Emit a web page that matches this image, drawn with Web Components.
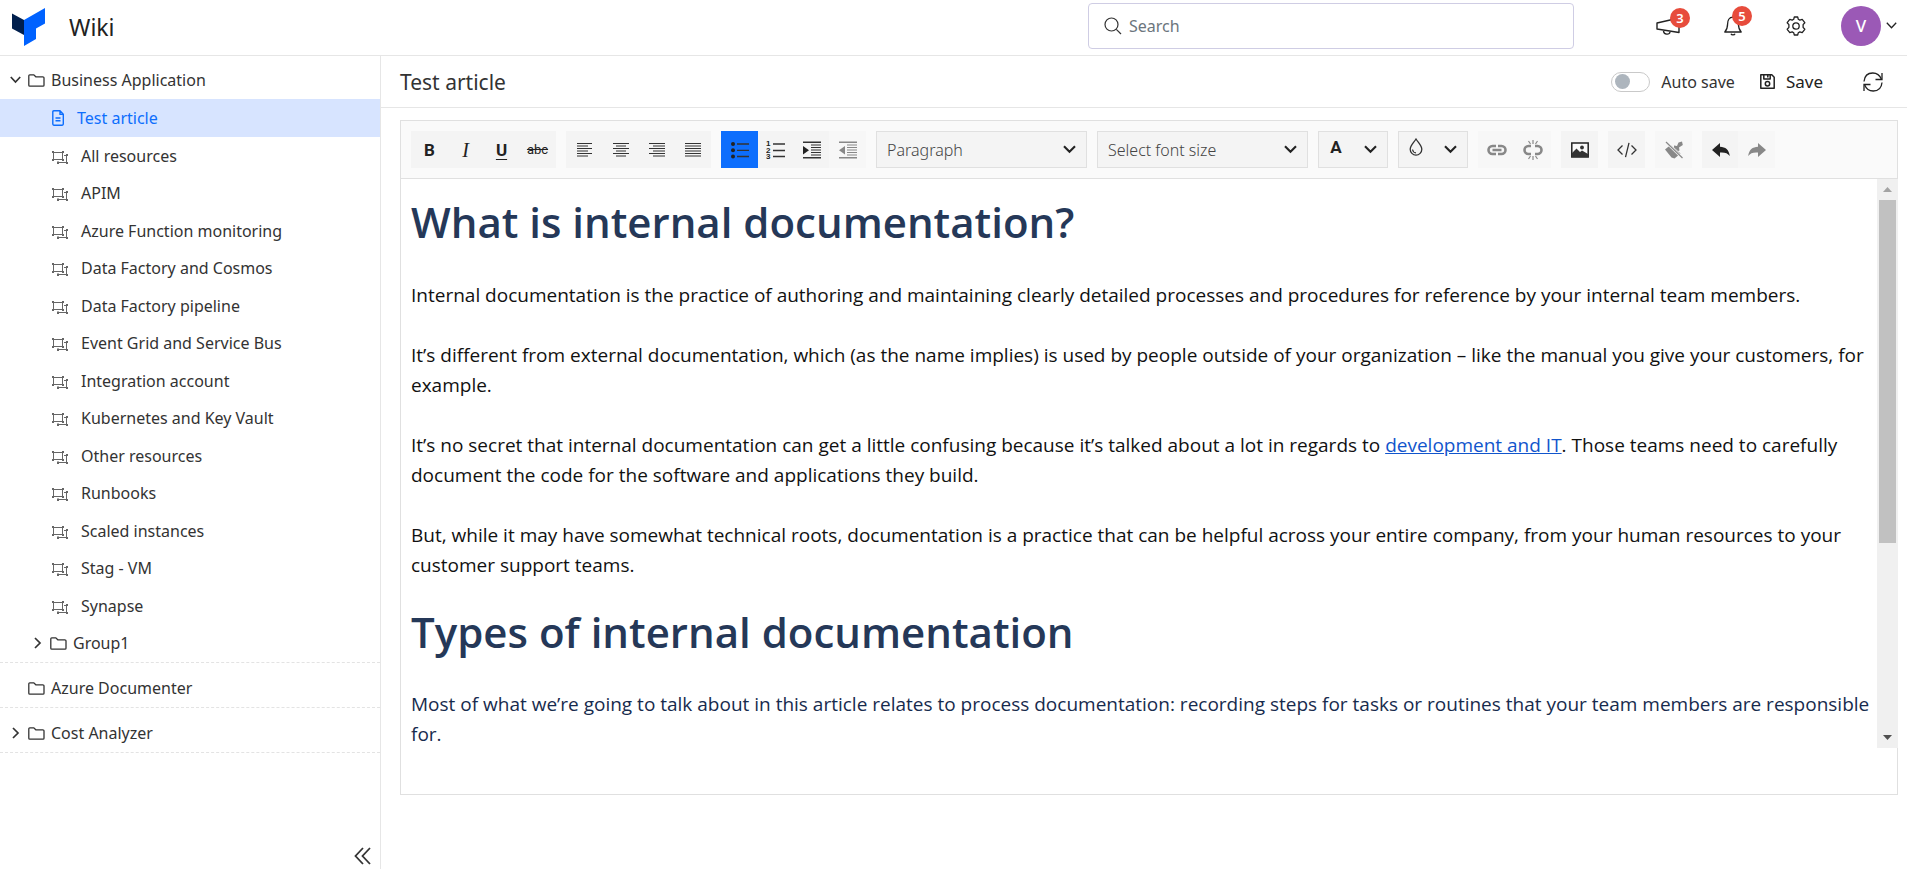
<!DOCTYPE html>
<html lang="en">
<head>
<meta charset="utf-8">
<title>Wiki</title>
<style>
  html, body { height: 100%; margin: 0; }
  body {
    background: #fff;
    color: #333;
    font-family: "Noto Sans", sans-serif;
    font-size: 16px;
    line-height: 24px;
  }
</style>
</head>
<body>
<wiki-app></wiki-app>

<script>
const ICONS = {
  logo: [33, 38, '<path d="M0 5.500L12 12v15L0 20.500z" fill="#001f4d"/><path d="M12 12L33 0v15.500L24 20.500V31L12 38z" fill="#0062ff"/>'],
  search: [18, 18, '<g fill="none" stroke="#333" stroke-width="1.200"><circle cx="7.500" cy="7.500" r="6.500"/><path d="M12.300 12.300L17 17"/></g>'],
  megaphone: [24, 18, '<g fill="none" stroke="#222" stroke-width="1.400" stroke-linejoin="round"><path d="M1 6L23 1v14.500L1 12z"/><path d="M7.500 14c.3 4 6 4 6.500 1"/></g>'],
  bell: [18, 20, '<g fill="none" stroke="#222" stroke-width="1.300" stroke-linejoin="round"><path d="M9 1.200C5 1.200 3.600 4.600 3.600 8c0 4-1 6-2.800 8h16.400c-1.800-2-2.800-4-2.800-8 0-3.400-1.400-6.800-5.400-6.800z"/><path d="M7 17.800c.5 1.500 3.500 1.500 4 0"/></g>'],
  gear: [20, 20, '<g fill="none" stroke="#222" stroke-width="1.300" stroke-linejoin="round"><circle cx="10" cy="10" r="3.200"/><path d="M8.300 1h3.400l.6 2.300 1.500.8 2.400-.8 2.600 3.400-1.700 1.900v2.800l1.700 1.900-2.600 3.400-2.400-.8-1.500.8-.6 2.300H8.300l-.6-2.300-1.500-.8-2.400.8-2.600-3.400 1.700-1.900V8.600L1.200 6.700l2.600-3.400 2.400.8 1.500-.8z"/></g>'],
  caret: [11, 7, '<path d="M.8.8l4.700 4.900L10.200.8" fill="none" stroke="#222" stroke-width="1.300"/>'],
  down: [11, 8, '<path d="M.8 1l4.700 5L10.200 1" fill="none" stroke="#333" stroke-width="1.700"/>'],
  select: [13, 9, '<path d="M1 1.300l5.500 5.500L12 1.300" fill="none" stroke="#222" stroke-width="2.100"/>'],
  right: [11, 12, '<path d="M3 1l5 5-5 5" fill="none" stroke="#333" stroke-width="1.700"/>'],
  folder: [17, 13, '<path d="M.8 11.200V1.800q0-1 1-1h4l2 2h7q1.200 0 1.200 1v7.400q0 1-1 1H1.800q-1 0-1-1z" fill="none" stroke="#333" stroke-width="1.300"/>'],
  file: [12, 16, '<g fill="none" stroke="#0d6efd" stroke-width="1.400" stroke-linejoin="round"><path d="M1.800.8H8l3.300 3.400v9.900q0 1.100-1.100 1.100H1.800Q.8 15.200.8 14.100V1.900Q.8.800 1.800.800zM8 1v3.400h3M3.500 8h5M3.500 10.800h5"/></g>'],
  resource: [16, 13, '<g fill="none" stroke="#666" stroke-width="1"><path d="M1.500 1.500h9v7h-9zM12 4.500h2.500v7h-8.500V10"/></g><g fill="#666"><path d="M0 0h2v2H0zM10 0h2v2h-2zM0 8h2v2H0zM10 8h2v2h-2zM14 3h2v2h-2zM14 11h2v2h-2zM5 11h2v2H5z"/></g>'],
  collapse: [17, 18, '<path d="M9 1L1.500 9 9 17M16 1L8.500 9l7.500 8" fill="none" stroke="#333" stroke-width="1.800"/>'],
  save: [15, 15, '<g fill="none" stroke="#222" stroke-width="1.500" stroke-linejoin="round"><path d="M.8.800h11l2.400 2.400v11H.8zM3.800 1v4h6.400V1M7.800 1v2.400"/><circle cx="7.500" cy="9.700" r="2.200"/></g>'],
  refresh: [20, 20, '<g fill="none" stroke="#222" stroke-width="1.300"><path d="M1 9.500C1.500 4 5 1 9.800 1c4 0 7 2.200 8.600 6.300M19 10.500c-.5 5.500-4 8.500-8.800 8.500-4 0-7-2.200-8.600-6.300"/><path d="M19 1v6.500h-6.500M1 19v-6.500h6.500"/></g>'],
  alignLeft: [16, 14, '<path d="M0 .5h15M0 3h11M0 5.500h15M0 8h11M0 10.500h15M0 13h11" stroke="#333" stroke-width="1.200"/>'],
  alignCenter: [16, 14, '<path d="M0 .5h16M3 3h10M0 5.500h16M3 8h10M0 10.500h16M3 13h10" stroke="#333" stroke-width="1.200"/>'],
  alignRight: [16, 14, '<path d="M0 .5h16M4 3h12M0 5.500h16M4 8h12M0 10.500h16M4 13h12" stroke="#333" stroke-width="1.200"/>'],
  alignJustify: [16, 14, '<path d="M0 .5h16M0 3h16M0 5.500h16M0 8h16M0 10.500h16M0 13h16" stroke="#333" stroke-width="1.200"/>'],
  bullets: [18, 18, '<g fill="#222"><circle cx="2" cy="3" r="2"/><circle cx="2" cy="9.300" r="2"/><circle cx="2" cy="15.500" r="2"/></g><path d="M6 3h12M6 9.300h12M6 15.500h12" stroke="#333" stroke-width="1.300"/>'],
  numbers: [19, 20, '<path d="M7 4h12M7 10.500h12M7 16.500h12" stroke="#333" stroke-width="1.300"/><g fill="#222" font-family="Liberation Sans" font-weight="700" font-size="8"><text x="0" y="6">1</text><text x="0" y="13">2</text><text x="0" y="19">3</text></g>'],
  indent: [18, 18, '<path d="M0 1.300h18M0 16.700h18" stroke="#333" stroke-width="1.500"/><path d="M8 4h10M8 6.500h10M8 9h10M8 11.500h10M8 14h10" stroke="#333" stroke-width="1.200"/><path d="M0 5l6 4.200L0 13.500z" fill="#222"/>'],
  outdent: [18, 18, '<path d="M0 1.300h18M0 16.700h18" stroke="#888" stroke-width="1.500"/><path d="M8 4h10M8 6.500h10M8 9h10M8 11.500h10M8 14h10" stroke="#888" stroke-width="1.200"/><path d="M6 5L0 9.200l6 4.300z" fill="#888"/>'],
  drop: [14, 18, '<path d="M7 1C4.500 5 1.200 7.500 1.200 11.300a5.800 5.800 0 0 0 11.600 0C12.800 7.500 9.500 5 7 1z" fill="none" stroke="#333" stroke-width="1.300"/><path d="M3.500 11.500c.3 2 1.500 3.200 3.500 3.400" fill="none" stroke="#333" stroke-width="1.200"/>'],
  link: [20, 12, '<g fill="none" stroke="#888" stroke-width="2.600"><path d="M9 2H5.500a4 4 0 0 0 0 8H9M11 2h3.500a4 4 0 0 1 0 8H11M5.500 6h9"/></g>'],
  unlink: [20, 20, '<g fill="none" stroke="#888"><path d="M8 6H5.500a4 4 0 0 0 0 8H8M12 6h2.500a4 4 0 0 1 0 8H12" stroke-width="2.600"/><path d="M10 0v4M10 16v4M5.500 1l2 3M14.500 1l-2 3M5.500 19l2-3M14.500 19l-2-3" stroke-width="1.200"/></g>'],
  image: [18, 16, '<path d="M.8 1h16.400v14H.8z" fill="#fafafa" stroke="#222" stroke-width="1.500"/><circle cx="11" cy="5.500" r="1.900" fill="#333"/><path d="M1 15v-4l4.500-4.500L9 10l2-1.500L17 12v3z" fill="#333"/>'],
  code: [20, 16, '<path d="M5.500 3.500L1 8l4.500 4.500M14.500 3.500L19 8l-4.500 4.500M12 .8L8.500 15.200" fill="none" stroke="#333" stroke-width="1.300"/>'],
  clear: [18, 18, '<path d="M0 8.500L5.500 4l10 8.500-6 5-3-1z" fill="#888"/><path d="M9 4.500l3 .5 1.500-3.500L17 .5l.8 3.500L14 6.500l.5 3-1.500.5-4-3.500z" fill="#888"/><path d="M1 1l16.500 16" stroke="#f7f7f7" stroke-width="2.600"/><path d="M1 1l16.500 16" stroke="#888" stroke-width="1.200"/>'],
  undo: [18, 14, '<path d="M8 0v3.800c5.500.2 9 3 9.800 9.200C15.500 10 13 9.200 8 9.500V14L0 7z" fill="#222"/>'],
  redo: [18, 14, '<path d="M10 0v3.800C4.500 4 1 6.800.2 13 2.500 10 5 9.200 10 9.500V14l8-7z" fill="#888"/>'],
};

/* Defines a custom element whose open shadow root holds the given markup. */
function define(name, html) {
  const template = document.createElement('template');
  template.innerHTML = html;
  customElements.define(name, class extends HTMLElement {
    constructor() {
      super();
      this.attachShadow({ mode: 'open' }).append(template.content.cloneNode(true));
    }
  });
}

class UiIcon extends HTMLElement {
  constructor() {
    super();
    this.attachShadow({ mode: 'open' });
  }
  connectedCallback() {
    const [w, h, body] = ICONS[this.getAttribute('name')];
    this.shadowRoot.innerHTML = `
      <style>:host { display: inline-flex; flex: none; } svg { display: block; }</style>
      <svg width="${w}" height="${h}" viewBox="0 0 ${w} ${h}" aria-hidden="true">${body}</svg>`;
  }
}
customElements.define('ui-icon', UiIcon);

define('ui-badge', `
  <style>
    :host {
      position: absolute; box-sizing: border-box; width: 20px; height: 20px;
      border-radius: 50%; background: #e74c3c; color: #fff;
      font-size: 13px; font-weight: 600; line-height: 20px; text-align: center;
    }
  </style>
  <slot></slot>`);

define('wiki-header', `
  <style>
    :host { display: block; }
    header {
      display: flex; align-items: center; box-sizing: border-box; height: 56px;
      padding: 0 10px 0 12px; border-bottom: 1px solid #e6e6e6;
    }
    header > ui-icon { margin-bottom: 2px; }
    h1 { margin: 0 auto 2px 24px; font-size: 23px; font-weight: 400; line-height: 30px; color: #222; }
    .search {
      display: flex; align-items: center; gap: 7px; box-sizing: border-box;
      width: 486px; height: 46px; padding: 0 15px; margin: 0 82px 3px 0;
      border: 1px solid #cfcde4; border-radius: 4px;
    }
    input { flex: 1; min-width: 0; border: 0; outline: 0; padding: 0; font: inherit; color: #333; background: none; }
    input::placeholder { color: #6c757d; opacity: 1; }
    .actions { display: flex; align-items: center; gap: 44px; padding-bottom: 4px; }
    button { position: relative; display: flex; align-items: center; padding: 0; border: 0; background: none; font: inherit; }
    .news ui-badge { right: -10px; top: -9px; }
    .alerts ui-badge { right: -10px; top: -10px; }
    .account { gap: 5px; margin: 0 0 4px 35px; }
    .avatar {
      width: 40px; height: 40px; border-radius: 50%; background: #9b59b6;
      color: #fff; font-size: 17px; font-weight: 500; line-height: 40px; text-align: center;
    }
  </style>
  <header>
    <ui-icon name="logo"></ui-icon>
    <h1>Wiki</h1>
    <label class="search"><ui-icon name="search"></ui-icon><input type="search" placeholder="Search" aria-label="Search"></label>
    <div class="actions">
      <button class="news" aria-label="Announcements"><ui-icon name="megaphone"></ui-icon><ui-badge>3</ui-badge></button>
      <button class="alerts" aria-label="Notifications"><ui-icon name="bell"></ui-icon><ui-badge>5</ui-badge></button>
      <button aria-label="Settings"><ui-icon name="gear"></ui-icon></button>
    </div>
    <button class="account" aria-label="Account"><span class="avatar">V</span><ui-icon name="caret"></ui-icon></button>
  </header>`);

define('tree-folder', `
  <style>
    :host { display: flex; align-items: center; padding-left: 10px; }
    :host([nested]) { padding-left: 32px; }
    .toggle { display: flex; width: 11px; margin-right: 7px; }
    button { display: flex; padding: 0; border: 0; background: none; }
    ui-icon[name=folder] { margin-right: 6px; }
    .right, .down { display: none; }
    :host([state=open]) .down, :host([state=closed]) .right { display: flex; }
  </style>
  <span class="toggle">
    <button class="down" aria-label="Collapse"><ui-icon name="down"></ui-icon></button>
    <button class="right" aria-label="Expand"><ui-icon name="right"></ui-icon></button>
  </span>
  <ui-icon name="folder"></ui-icon>
  <slot></slot>`);

define('tree-page', `
  <style>
    :host { display: flex; }
    a { display: flex; flex: 1; align-items: center; gap: 13px; padding-left: 52px; color: #333; text-decoration: none; }
    .file { display: none; }
    .resource { padding-top: 3px; }
    :host([current]) a { background: #d7e4ff; color: #0d6efd; }
    :host([current]) .file { display: flex; }
    :host([current]) .resource { display: none; }
  </style>
  <a href="#"><ui-icon class="file" name="file"></ui-icon><ui-icon class="resource" name="resource"></ui-icon><slot></slot></a>`);

define('wiki-sidebar', `
  <style>
    :host { display: block; }
    nav { display: flex; flex-direction: column; box-sizing: border-box; height: 100%; border-right: 1px solid #e6e6e6; }
    section { border-bottom: 1px dashed #e3e3e3; }
    .top { height: 38px; padding-top: 5px; }
    .root { height: 38px; padding-top: 6px; }
    .pages { display: grid; grid-auto-rows: 38px 37px; }
    .fold { display: flex; align-self: flex-end; margin: auto 9px 4px 0; padding: 0; border: 0; background: none; }
  </style>
  <nav aria-label="Articles">
    <section>
      <tree-folder class="top" state="open">Business Application</tree-folder>
      <div class="pages">
        <tree-page current>Test article</tree-page>
        <tree-page>All resources</tree-page>
        <tree-page>APIM</tree-page>
        <tree-page>Azure Function monitoring</tree-page>
        <tree-page>Data Factory and Cosmos</tree-page>
        <tree-page>Data Factory pipeline</tree-page>
        <tree-page>Event Grid and Service Bus</tree-page>
        <tree-page>Integration account</tree-page>
        <tree-page>Kubernetes and Key Vault</tree-page>
        <tree-page>Other resources</tree-page>
        <tree-page>Runbooks</tree-page>
        <tree-page>Scaled instances</tree-page>
        <tree-page>Stag - VM</tree-page>
        <tree-page>Synapse</tree-page>
        <tree-folder nested state="closed">Group1</tree-folder>
      </div>
    </section>
    <section><tree-folder class="root">Azure Documenter</tree-folder></section>
    <section><tree-folder class="root" state="closed">Cost Analyzer</tree-folder></section>
    <button class="fold" aria-label="Collapse sidebar"><ui-icon name="collapse"></ui-icon></button>
  </nav>`);

define('page-bar', `
  <style>
    :host {
      display: flex; align-items: center; box-sizing: border-box; height: 52px;
      padding: 0 24px 0 19px; border-bottom: 1px solid #e6e6e6;
    }
    h2 { margin: 0 auto 0 0; font-size: 21px; font-weight: 400; line-height: 28px; }
    label { display: flex; align-items: center; gap: 11px; margin-right: 25px; }
    input {
      appearance: none; box-sizing: border-box; display: flex; align-items: center;
      width: 39px; height: 20px; margin: 0; padding: 0 3px; border: 1px solid #c9c9c9; border-radius: 10px;
    }
    input::before { content: ""; width: 15px; height: 15px; border-radius: 50%; background: #adb5bd; }
    input:checked { justify-content: flex-end; background: #d7e4ff; }
    button { display: flex; align-items: center; gap: 11px; padding: 0; border: 0; background: none; font: inherit; color: #222; }
    .save { margin-right: 40px; font-size: 17px; }
  </style>
  <h2>Test article</h2>
  <label><input type="checkbox" role="switch">Auto save</label>
  <button class="save"><ui-icon name="save"></ui-icon>Save</button>
  <button aria-label="Refresh"><ui-icon name="refresh"></ui-icon></button>`);

define('tool-group', `
  <style>:host { display: flex; }</style>
  <slot></slot>`);

define('tool-button', `
  <style>
    :host { display: flex; }
    :host(:not(:first-child)) { margin-left: -1px; }
    :host([active]) { z-index: 1; }
    button {
      display: flex; align-items: center; justify-content: center; width: 37px; height: 37px;
      padding: 0; border: 0; background: #f4f4f4; color: #222; font: inherit;
    }
    :host([active]) button { background: #0d6efd; }
    :host([muted]) button { background: #f7f7f7; }
  </style>
  <button><slot></slot></button>`);

define('tool-split', `
  <style>
    :host { display: flex; }
    button {
      display: flex; align-items: center; justify-content: space-between; box-sizing: border-box;
      width: 70px; height: 37px; padding: 0 10px; border: 1px solid #e0e0e0; background: #f4f4f4; font: inherit; color: #222;
    }
    .mark { display: flex; justify-content: center; width: 14px; padding-bottom: 5px; }
  </style>
  <button><span class="mark"><slot></slot></span><ui-icon name="select"></ui-icon></button>`);

class ToolSelect extends HTMLElement {
  constructor() {
    super();
    this.attachShadow({ mode: 'open' });
  }
  connectedCallback() {
    const label = this.getAttribute('label');
    const options = this.getAttribute('options').split('|').map(o => `<option>${o}</option>`).join('');
    this.shadowRoot.innerHTML = `
      <style>
        :host { display: grid; align-items: center; width: 211px; }
        select, ui-icon { grid-area: 1 / 1; }
        select {
          appearance: none; width: 100%; height: 37px; padding: 0 10px; border: 1px solid #e0e0e0;
          border-radius: 0; background: #f4f4f4; color: #444; font: inherit; font-weight: 300;
        }
        ui-icon { justify-self: end; margin-right: 11px; pointer-events: none; }
      </style>
      <select aria-label="${label}">${options}</select><ui-icon name="select"></ui-icon>`;
  }
}
customElements.define('tool-select', ToolSelect);

define('editor-toolbar', `
  <style>
    :host {
      display: flex; flex-wrap: wrap; gap: 10px; padding: 10px;
      background: #fafafa; border-bottom: 1px solid #e0e0e0;
    }
    b, i, u, s { font-size: 17px; line-height: 20px; }
    b, u { font-family: Roboto, sans-serif; font-weight: 700; }
    i { font-family: "Liberation Serif", serif; font-size: 20px; }
    u { text-underline-offset: 3px; }
    s { font-family: Roboto, sans-serif; font-size: 13px; }
  </style>
  <tool-group>
    <tool-button><b>B</b></tool-button><tool-button><i>I</i></tool-button><tool-button><u>U</u></tool-button><tool-button><s>abc</s></tool-button>
  </tool-group>
  <tool-group>
    <tool-button><ui-icon name="alignLeft"></ui-icon></tool-button><tool-button><ui-icon name="alignCenter"></ui-icon></tool-button><tool-button><ui-icon name="alignRight"></ui-icon></tool-button><tool-button><ui-icon name="alignJustify"></ui-icon></tool-button>
  </tool-group>
  <tool-group>
    <tool-button active><ui-icon name="bullets"></ui-icon></tool-button><tool-button><ui-icon name="numbers"></ui-icon></tool-button><tool-button><ui-icon name="indent"></ui-icon></tool-button><tool-button muted><ui-icon name="outdent"></ui-icon></tool-button>
  </tool-group>
  <tool-select label="Format" options="Paragraph|Heading 1|Heading 2"></tool-select>
  <tool-select label="Font size" options="Select font size|Small|Large"></tool-select>
  <tool-split><b>A</b></tool-split>
  <tool-split><ui-icon name="drop"></ui-icon></tool-split>
  <tool-group>
    <tool-button muted><ui-icon name="link"></ui-icon></tool-button><tool-button muted><ui-icon name="unlink"></ui-icon></tool-button>
  </tool-group>
  <tool-group><tool-button><ui-icon name="image"></ui-icon></tool-button></tool-group>
  <tool-group><tool-button><ui-icon name="code"></ui-icon></tool-button></tool-group>
  <tool-group><tool-button muted><ui-icon name="clear"></ui-icon></tool-button></tool-group>
  <tool-group>
    <tool-button><ui-icon name="undo"></ui-icon></tool-button><tool-button muted><ui-icon name="redo"></ui-icon></tool-button>
  </tool-group>`);

define('scroll-rail', `
  <style>
    :host { display: flex; flex-direction: column; align-items: stretch; width: 21px; margin-right: -1px; background: #f0f0f0; }
    .end { display: flex; align-items: center; justify-content: center; height: 21px; }
    .track { flex: 1; padding: 0 2px; }
    .thumb { height: 65%; background: #c1c1c1; }
  </style>
  <div class="end"><svg width="9" height="5" viewBox="0 0 9 5"><path d="M0 5L4.500 0 9 5z" fill="#a3a3a3"/></svg></div>
  <div class="track"><div class="thumb"></div></div>
  <div class="end"><svg width="9" height="5" viewBox="0 0 9 5"><path d="M0 0L4.500 5 9 0z" fill="#505050"/></svg></div>`);

define('wiki-article', `
  <style>
    :host { display: block; overflow-y: auto; scrollbar-width: none; padding: 16px 5px 0 10px; font-family: "Open Sans", sans-serif; }
    h1 { margin: 0 0 32px; color: #253858; font-size: 42px; font-weight: 600; line-height: 53px; }
    p { margin: 0 0 30px; color: #111; font-size: 19px; line-height: 30px; }
    p + h1 { margin: -5px 0 31px; }
    p:last-child { margin: 0; color: #172b4d; }
    a { color: #1155cc; }
  </style>
  <h1>What is internal documentation?</h1>
  <p>Internal documentation is the practice of authoring and maintaining clearly detailed processes and procedures for reference by your internal team members.</p>
  <p>It’s different from external documentation, which (as the name implies) is used by people outside of your organization – like the manual you give your customers, for example.</p>
  <p>It’s no secret that internal documentation can get a little confusing because it’s talked about a lot in regards to <a href="#">development and IT</a>. Those teams need to carefully document the code for the software and applications they build.</p>
  <p>But, while it may have somewhat technical roots, documentation is a practice that can be helpful across your entire company, from your human resources to your customer support teams.</p>
  <h1>Types of internal documentation</h1>
  <p>Most of what we’re going to talk about in this article relates to process documentation: recording steps for tasks or routines that your team members are responsible for.</p>`);

define('wiki-editor', `
  <style>
    :host { display: flex; flex-direction: column; min-height: 0; border: 1px solid #e0e0e0; }
    .body { display: flex; flex: 1; min-height: 0; margin-bottom: 46px; }
    wiki-article { flex: 1; min-width: 0; }
  </style>
  <editor-toolbar></editor-toolbar>
  <div class="body"><wiki-article></wiki-article><scroll-rail></scroll-rail></div>`);

define('wiki-app', `
  <style>
    :host { display: grid; grid-template: auto minmax(0, 1fr) / 381px minmax(0, 1fr); height: 100vh; }
    wiki-header { grid-column: 1 / -1; }
    main { display: flex; flex-direction: column; min-height: 0; }
    wiki-editor { flex: 1; margin: 12px 9px 74px 19px; }
  </style>
  <wiki-header></wiki-header>
  <wiki-sidebar></wiki-sidebar>
  <main><page-bar></page-bar><wiki-editor></wiki-editor></main>`);
</script>
</body>
</html>
